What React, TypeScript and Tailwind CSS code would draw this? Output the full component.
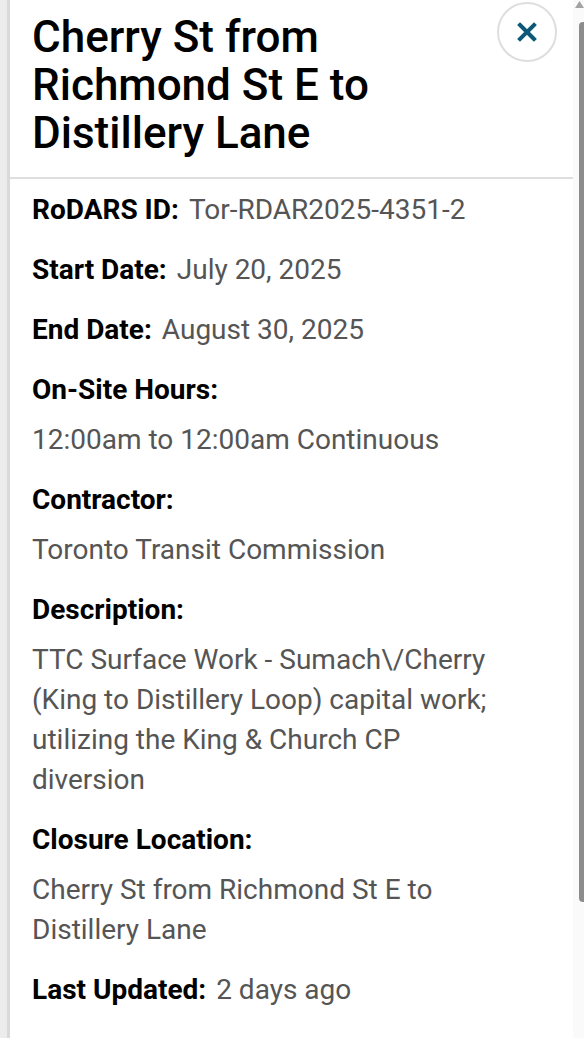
import React from 'react';

type Row = {
    label: string;
    value: string;
    inline?: boolean;
};

const rows: Row[] = [
    { label: 'RoDARS ID:', value: 'Tor-RDAR2025-4351-2', inline: true },
    { label: 'Start Date:', value: 'July 20, 2025', inline: true },
    { label: 'End Date:', value: 'August 30, 2025', inline: true },
    { label: 'On-Site Hours:', value: '12:00am to 12:00am Continuous' },
    { label: 'Contractor:', value: 'Toronto Transit Commission' },
    {
        label: 'Description:',
        value: 'TTC Surface Work - Sumach\\/Cherry (King to Distillery Loop) capital work; utilizing the King & Church CP diversion',
    },
    { label: 'Closure Location:', value: 'Cherry St from Richmond St E to Distillery Lane' },
    { label: 'Last Updated:', value: '2 days ago', inline: true },
];

export default function App() {
    return (
        <div className="flex h-[1038px] w-[584px] overflow-hidden bg-white font-['Roboto',sans-serif]">
            {/* left edge of the map behind the panel */}
            <div className="w-[7px] shrink-0 bg-[#ececec]" />

            <div className="flex min-w-0 flex-1 flex-col border-l-[3px] border-[#d9d9d9] bg-white">
                {/* Header */}
                <div className="flex items-start justify-between border-b-2 border-[#dedede] pb-[20px] pl-[22px] pr-[16px] pt-[2px]">
                    <h1 className="mt-[11px] w-[420px] text-[44px] font-medium leading-[48px] text-black">
                        Cherry St from Richmond St E to Distillery Lane
                    </h1>
                    <button className="flex h-[60px] w-[60px] shrink-0 items-center justify-center rounded-full border-2 border-[#dedede] bg-white">
                        <svg width="20" height="20" viewBox="0 0 20 20">
                            <path d="M3 3 L17 17 M17 3 L3 17" stroke="#0b5877" strokeWidth="4" strokeLinecap="square" fill="none" />
                        </svg>
                    </button>
                </div>

                {/* Details */}
                <div className="flex flex-col gap-[20px] pl-[22px] pr-[60px] pt-[11px] text-[28px] leading-[40px]">
                    {rows.map((row) =>
                        row.inline ? (
                            <div key={row.label} className="flex flex-wrap gap-x-[10px]">
                                <span className="font-bold text-black">{row.label}</span>
                                <span className="text-[#555555]">{row.value}</span>
                            </div>
                        ) : (
                            <div key={row.label} className="flex flex-col gap-[10px]">
                                <span className="font-bold text-black">{row.label}</span>
                                <span className="text-[#555555]">{row.value}</span>
                            </div>
                        )
                    )}
                </div>
            </div>

            {/* scrollbar */}
            <div className="flex w-[11px] shrink-0 flex-col items-end bg-[#fafafa]">
                <svg width="9" height="8" viewBox="0 0 9 8" className="mt-[1px]">
                    <path d="M4.5 0 L9 7 L0 7 Z" fill="#a3a3a3" />
                </svg>
                <div className="mt-[13px] h-[880px] w-[5px] rounded-l-[4px] bg-[#8c8c8c]" />
            </div>
        </div>
    );
}
